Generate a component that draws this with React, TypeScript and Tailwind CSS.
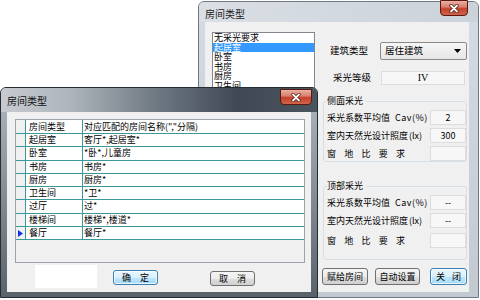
import React from "react";

function CloseBtn({ className }: { className: string }) {
  return (
    <div className={className}>
      <svg width="10" height="9" viewBox="0 0 10 9">
        <path d="M2 1.5L8 7.5M8 1.5L2 7.5" stroke="#4a1610" strokeWidth="3.2" strokeLinecap="round" />
        <path d="M2 1.5L8 7.5M8 1.5L2 7.5" stroke="#ffffff" strokeWidth="1.8" strokeLinecap="round" />
      </svg>
    </div>
  );
}

const closeCls =
  "absolute flex items-center justify-center rounded-b-[4px] border border-[#5a1a12] bg-[linear-gradient(to_bottom,#eab0a3_0%,#d9806c_42%,#c4402a_55%,#d0654b_100%)]";

const btn =
  "flex items-center justify-center rounded-[3px] border border-[#707070] bg-[linear-gradient(to_bottom,#f4f4f4_0%,#ececec_50%,#dedede_51%,#d0d0d0_100%)] text-[9px] leading-none text-black";
const btnFocus =
  "flex items-center justify-center rounded-[3px] border border-[#3c7fb1] bg-[linear-gradient(to_bottom,#eaf6fd_0%,#d9f0fc_50%,#bee6fd_51%,#a7d9f5_100%)] text-[9px] leading-none text-black shadow-[inset_0_0_0_1px_#ffffffaa]";

const box =
  "flex h-[15px] w-[36px] items-center justify-center border border-[#dcdcdc] bg-[#f7f7f7] text-[9px] leading-none";

function Spaced({ chars }: { chars: string[] }) {
  return (
    <div className="flex w-[78px] justify-between text-[9px] leading-none">
      {chars.map((c, i) => (
        <span key={i}>{c}</span>
      ))}
    </div>
  );
}

function CavLabel() {
  return (
    <div className="flex text-[9px] leading-none">
      <span>采光系数平均值</span>
      <span className="ml-[5px] tracking-[0.5px]">Cav(%)</span>
    </div>
  );
}

function LuxLabel() {
  return (
    <div className="flex text-[9px] leading-none">
      <span>室内天然光设计照度</span>
      <span className="ml-[1px]">(lx)</span>
    </div>
  );
}

const listItems = ["无采光要求", "起居室", "卧室", "书房", "厨房", "卫生间", "过厅"];

const rows: [string, string][] = [
  ["起居室", "客厅*,起居室*"],
  ["卧室", "*卧*,儿童房"],
  ["书房", "书房*"],
  ["厨房", "厨房*"],
  ["卫生间", "*卫*"],
  ["过厅", "过*"],
  ["楼梯间", "楼梯*,楼道*"],
  ["餐厅", "餐厅*"],
];

function BackWindow() {
  return (
    <div className="absolute left-[198px] top-[1px] flex h-[297px] w-[281px] flex-col rounded-t-[6px] border border-[#6f7882] bg-[linear-gradient(to_bottom,#d5dbe2,#c2c9d1)]">
      <div className="relative h-[20px] shrink-0 rounded-t-[5px] bg-[linear-gradient(to_right,#dadfe5,#cbd2da)] pl-[6px] pt-[7px] text-[10px] leading-[10px] text-[#1a1a1a]">
        房间类型
        <CloseBtn className={`${closeCls} right-[10px] top-[-2px] h-[16px] w-[28px]`} />
      </div>
      <div className="mb-[5px] ml-[6px] mr-[9px] flex flex-1 items-start bg-[#f0f0f0]">
        {/* list */}
        <div className="ml-[7px] mt-[10px] h-[70px] w-[103px] overflow-hidden border border-[#828790] bg-white">
          {listItems.map((t, i) => (
            <div
              key={t}
              className={
                i === 1
                  ? "h-[9.5px] bg-[#3399ff] pl-[1px] text-[9px] leading-[9.5px] text-white"
                  : "h-[9.5px] pl-[1px] text-[9px] leading-[9.5px] text-black"
              }
            >
              {t}
            </div>
          ))}
        </div>
        {/* right column */}
        <div className="ml-[7px] flex w-[145px] flex-col">
          <div className="mt-[20px] flex h-[18px] items-center">
            <div className="w-[58px] pl-[8px] text-[9.5px] leading-none">建筑类型</div>
            <div className="flex h-[18px] w-[87px] items-center justify-between rounded-[2px] border border-[#8a8a8a] bg-[linear-gradient(to_bottom,#f6f6f6,#e6e6e6)] pl-[4px] pr-[5px] text-[9.5px] leading-none">
              <span>居住建筑</span>
              <svg width="7" height="4" viewBox="0 0 7 4">
                <path d="M0 0h7L3.5 4z" fill="#000" />
              </svg>
            </div>
          </div>
          <div className="mt-[11px] flex h-[14px] items-center">
            <div className="w-[59px] pl-[11px] text-[9.5px] leading-none">采光等级</div>
            <div className="flex h-[14px] w-[84px] items-center justify-center border border-[#dcdcdc] bg-[#f7f7f7] font-['Liberation_Serif',serif] text-[10px] leading-none">
              IV
            </div>
          </div>

          <fieldset className="ml-[1px] mt-[11px] w-[144px] rounded-[3px] border border-[#d5dfe5] pb-0 pl-[3px] pr-0">
            <legend className="pr-[3px] text-[9px] leading-[10px]">侧面采光</legend>
            <div className="mt-[4px] flex h-[15px] items-center justify-between">
              <CavLabel />
              <div className={box}>2</div>
            </div>
            <div className="mt-[3px] flex h-[15px] items-center justify-between">
              <LuxLabel />
              <div className={box}>300</div>
            </div>
            <div className="mt-[3px] flex h-[15px] items-center justify-between">
              <Spaced chars={["窗", "地", "比", "要", "求"]} />
              <div className={box}></div>
            </div>
          </fieldset>

          <fieldset className="ml-[1px] mt-[19px] w-[144px] rounded-[3px] border border-[#d5dfe5] pb-[11px] pl-[3px] pr-0">
            <legend className="pr-[3px] text-[9px] leading-[10px]">顶部采光</legend>
            <div className="mt-[4px] flex h-[15px] items-center justify-between">
              <CavLabel />
              <div className={box}>--</div>
            </div>
            <div className="mt-[3px] flex h-[15px] items-center justify-between">
              <LuxLabel />
              <div className={box}>--</div>
            </div>
            <div className="mt-[5px] flex h-[15px] items-center justify-between">
              <Spaced chars={["窗", "地", "比", "要", "求"]} />
              <div className={box}></div>
            </div>
          </fieldset>

          <div className="mt-[8px] flex h-[17px]">
            <div className={`${btn} w-[46px]`}>赋给房间</div>
            <div className={`${btn} ml-[7px] w-[45px]`}>自动设置</div>
            <div className={`${btnFocus} ml-[10px] w-[37px] gap-[7px]`}>
              <span>关</span>
              <span>闭</span>
            </div>
          </div>
        </div>
      </div>
    </div>
  );
}

function FrontWindow() {
  return (
    <div className="absolute left-0 top-[87px] flex h-[211px] w-[318px] flex-col rounded-t-[6px] border border-[#262c33] bg-[linear-gradient(to_bottom,#b1b8bf,#59626b)]">
      <div className="relative h-[24px] shrink-0 rounded-t-[5px] bg-[linear-gradient(to_right,#c6cbd1_0%,#aeb5bc_22%,#6d7781_50%,#3f4853_75%,#4a545f_100%)] pl-[6px] pt-[8px] text-[10px] leading-[10px] text-[#111]">
        房间类型
        <CloseBtn className={`${closeCls} right-[5px] top-[1px] h-[16px] w-[32px]`} />
      </div>
      <div className="mb-[5px] ml-[6px] mr-[6px] flex flex-1 flex-col bg-[#f0f0f0]">
        {/* grid */}
        <div className="ml-[8px] mt-[7px] flex h-[144px] w-[290px] flex-col border border-[#9ca3ab] bg-[#f0f0f0]">
          <div className="flex h-[14px] shrink-0 border-b border-[#3a9a9a] text-[9px] leading-[13px]">
            <div className="w-[10px] border-r border-[#3a9a9a] bg-[#f0f0f0]"></div>
            <div className="w-[57px] border-r border-[#3a9a9a] bg-white pl-[3px]">房间类型</div>
            <div className="flex-1 bg-white pl-[1px]">对应匹配的房间名称(","分隔)</div>
          </div>
          {rows.map(([a, b], i) => (
            <div key={a} className="flex h-[13.3px] shrink-0 border-b border-[#3a9a9a] text-[9px] leading-[12.3px]">
              <div className="flex w-[10px] items-center justify-center border-r border-[#3a9a9a] bg-[#f0f0f0]">
                {i === rows.length - 1 && (
                  <svg width="5" height="7" viewBox="0 0 5 7">
                    <path d="M0 0L5 3.5L0 7z" fill="#1030f0" />
                  </svg>
                )}
              </div>
              <div className="w-[57px] border-r border-[#3a9a9a] bg-white pl-[3px]">{a}</div>
              <div className="flex-1 bg-white pl-[1px]">{b}</div>
            </div>
          ))}
        </div>
        {/* bottom */}
        <div className="mt-[2px] flex items-start">
          <div className="ml-[28px] h-[23px] w-[62px] bg-white"></div>
          <div className={`${btnFocus} ml-[16px] mt-[5px] h-[15px] w-[45px] gap-[9px]`}>
            <span>确</span>
            <span>定</span>
          </div>
          <div className={`${btn} ml-[52px] mt-[6px] h-[15px] w-[45px] gap-[9px]`}>
            <span>取</span>
            <span>消</span>
          </div>
        </div>
      </div>
    </div>
  );
}

export default function App() {
  return (
    <div className="relative h-[300px] w-[480px] overflow-hidden bg-white font-['Noto_Sans_CJK_SC','Noto_Sans',sans-serif] text-[9px] text-black">
      <BackWindow />
      <FrontWindow />
    </div>
  );
}
